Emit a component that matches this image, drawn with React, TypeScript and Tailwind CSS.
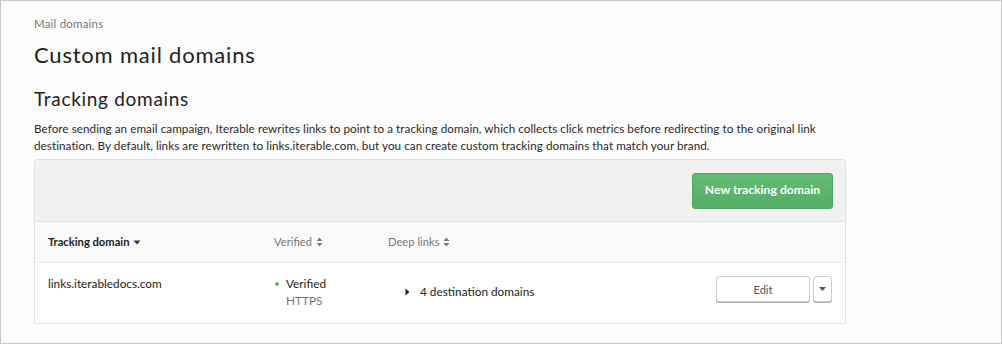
import React from "react";

const font = { fontFamily: "Lato, 'Open Sans', Arial, sans-serif" };

function SortBoth() {
  return (
    <svg width="7" height="10" viewBox="0 0 7 10" className="ml-[4px] inline-block">
      <path d="M3.5 0.5 L6.5 4 H0.5 Z" fill="#7a7a7a" />
      <path d="M3.5 9.5 L6.5 6 H0.5 Z" fill="#7a7a7a" />
    </svg>
  );
}

export default function App() {
  return (
    <div
      className="w-[1002px] h-[344px] bg-[#fcfcfc] border border-[#c8c8c8] box-border overflow-hidden"
      style={font}
    >
      <div className="pl-[33px] pt-[16px] w-[845px]">
        <div className="text-[11.5px] leading-[14px] text-[#777] tracking-[0.2px]">Mail domains</div>
        <h1 className="mt-[10px] text-[22px] leading-[28px] text-[#222] font-normal tracking-[0.8px]">Custom mail domains</h1>
        <h2 className="mt-[18px] text-[19px] leading-[24px] text-[#222] font-normal tracking-[0.7px]">Tracking domains</h2>
        <p className="mt-[9px] w-[805px] text-[11.7px] leading-[17px] text-[#2a2a2a] tracking-[0.05px]">
          Before sending an email campaign, Iterable rewrites links to point to a tracking domain, which collects click metrics before redirecting to the original link destination. By default, links are rewritten to links.iterable.com, but you can create custom tracking domains that match your brand.
        </p>
        <div className="mt-[5px] border border-[#e0e0e0] rounded-[3px] bg-white overflow-hidden">
          <div className="h-[62px] bg-[#f0f1f0] border-b border-[#e0e0e0] flex items-center justify-end pr-[12px]">
            <button className="w-[141px] h-[36px] rounded-[3px] bg-gradient-to-b from-[#62bd72] to-[#55ad66] border border-[#52a862] text-white text-[12.2px] font-bold">
              New tracking domain
            </button>
          </div>
          <div className="h-[41px] bg-[#fafafa] border-b border-[#ececec] flex items-center text-[11.2px]">
            <div className="w-[239px] pl-[13px] font-bold text-[#222] flex items-center">
              Tracking domain
              <svg width="8" height="5" viewBox="0 0 8 5" className="ml-[4px] mt-[2px]">
                <path d="M0.5 0.5 H7.5 L4 4.5 Z" fill="#333" />
              </svg>
            </div>
            <div className="w-[114px] text-[#777] flex items-center">Verified<SortBoth /></div>
            <div className="text-[#777] flex items-center">Deep links<SortBoth /></div>
          </div>
          <div className="h-[60px] flex items-start text-[11.8px] leading-[17px]">
            <div className="w-[239px] pl-[13px] pt-[12px] text-[#222]">links.iterabledocs.com</div>
            <div className="w-[114px] pt-[12px] pl-[1px]">
              <div className="flex items-center text-[#222]">
                <span className="w-[4px] h-[4px] rounded-full bg-[#5cb85c] mr-[7px]" />
                Verified
              </div>
              <div className="pl-[11px] text-[#777]">HTTPS</div>
            </div>
            <div className="flex-1 pt-[20px] pl-[17px] flex items-center text-[#222]">
              <svg width="5" height="8" viewBox="0 0 5 8" className="mr-[10px]">
                <path d="M0.5 0.5 L4.5 4 L0.5 7.5 Z" fill="#222" />
              </svg>
              4 destination domains
            </div>
            <div className="pt-[13px] pr-[13px] flex gap-[3px]">
              <button className="w-[94px] h-[26px] bg-white border border-[#ccc] rounded-[3px] shadow-[0_1px_0_#aaa] text-[11px] text-[#555]">Edit</button>
              <button className="w-[19px] h-[26px] bg-white border border-[#ccc] rounded-[3px] shadow-[0_1px_0_#aaa] flex items-center justify-center">
                <svg width="7" height="4" viewBox="0 0 7 4"><path d="M0 0 H7 L3.5 4 Z" fill="#555" /></svg>
              </button>
            </div>
          </div>
        </div>
      </div>
    </div>
  );
}
